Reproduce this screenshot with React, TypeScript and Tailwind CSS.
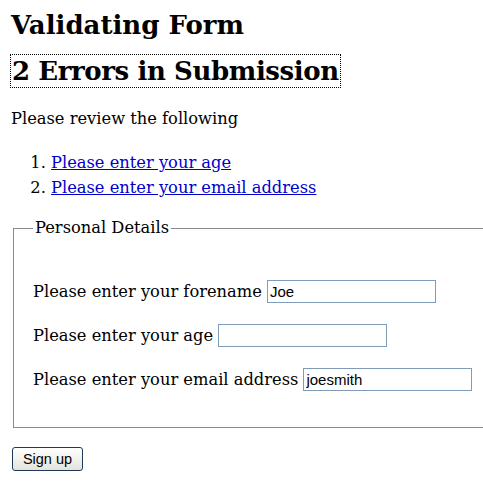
export default function App() {
  return (
    <div className="min-h-screen bg-white pl-[11px] pt-[8px] text-black font-['DejaVu_Serif',serif]">
      <h1 className="text-[26px] leading-[34px] font-bold">Validating Form</h1>

      <h2 className="mt-[12px] -ml-[1px] inline-block border border-dotted border-black px-[1px] text-[26px] leading-[32px] font-bold tracking-[-0.4px]">
        2 Errors in Submission
      </h2>

      <p className="mt-[21px] text-[16.3px] leading-[20px]">Please review the following</p>

      <ol className="mt-[21px] list-decimal pl-[40px] text-[16.3px] leading-[25px]">
        <li>
          <a href="#age" className="text-[#0000cc] underline">Please enter your age</a>
        </li>
        <li>
          <a href="#email" className="text-[#0000cc] underline">Please enter your email address</a>
        </li>
      </ol>

      <fieldset className="mt-[18px] ml-[2px] -mr-[10px] border border-r-0 border-[#8a8a8a] pl-[19px] pr-0 pb-[36px] pt-[6px] text-[16.3px]">
        <legend className="ml-0 px-[2px] text-[16.3px] leading-[20px]">Personal Details</legend>

        <div className="flex flex-col gap-[21px] pt-[36px]">
          <div className="flex items-center gap-[5px]">
            <label htmlFor="forename" className="leading-[23px]">Please enter your forename</label>
            <input
              id="forename"
              defaultValue="Joe"
              className="h-[23px] w-[169px] border border-[#7f9db9] px-[2px] text-[15px] font-['Liberation_Sans',Arial,sans-serif] outline-none"
            />
          </div>
          <div className="flex items-center gap-[5px]">
            <label htmlFor="age" className="leading-[23px]">Please enter your age</label>
            <input
              id="age"
              className="h-[23px] w-[169px] border border-[#7f9db9] px-[2px] text-[15px] font-['Liberation_Sans',Arial,sans-serif] outline-none"
            />
          </div>
          <div className="flex items-center gap-[5px]">
            <label htmlFor="email" className="leading-[23px]">Please enter your email address</label>
            <input
              id="email"
              defaultValue="joesmith"
              className="h-[23px] w-[169px] border border-[#7f9db9] px-[2px] text-[15px] font-['Liberation_Sans',Arial,sans-serif] outline-none"
            />
          </div>
        </div>
      </fieldset>

      <button
        type="submit"
        className="mt-[19px] ml-[1px] h-[24px] w-[71px] rounded-[3px] border border-[#1f3a56] bg-gradient-to-b from-white to-[#e4e4dc] text-[14.5px] leading-none font-['Liberation_Sans',Arial,sans-serif]"
      >
        Sign up
      </button>
    </div>
  )
}
